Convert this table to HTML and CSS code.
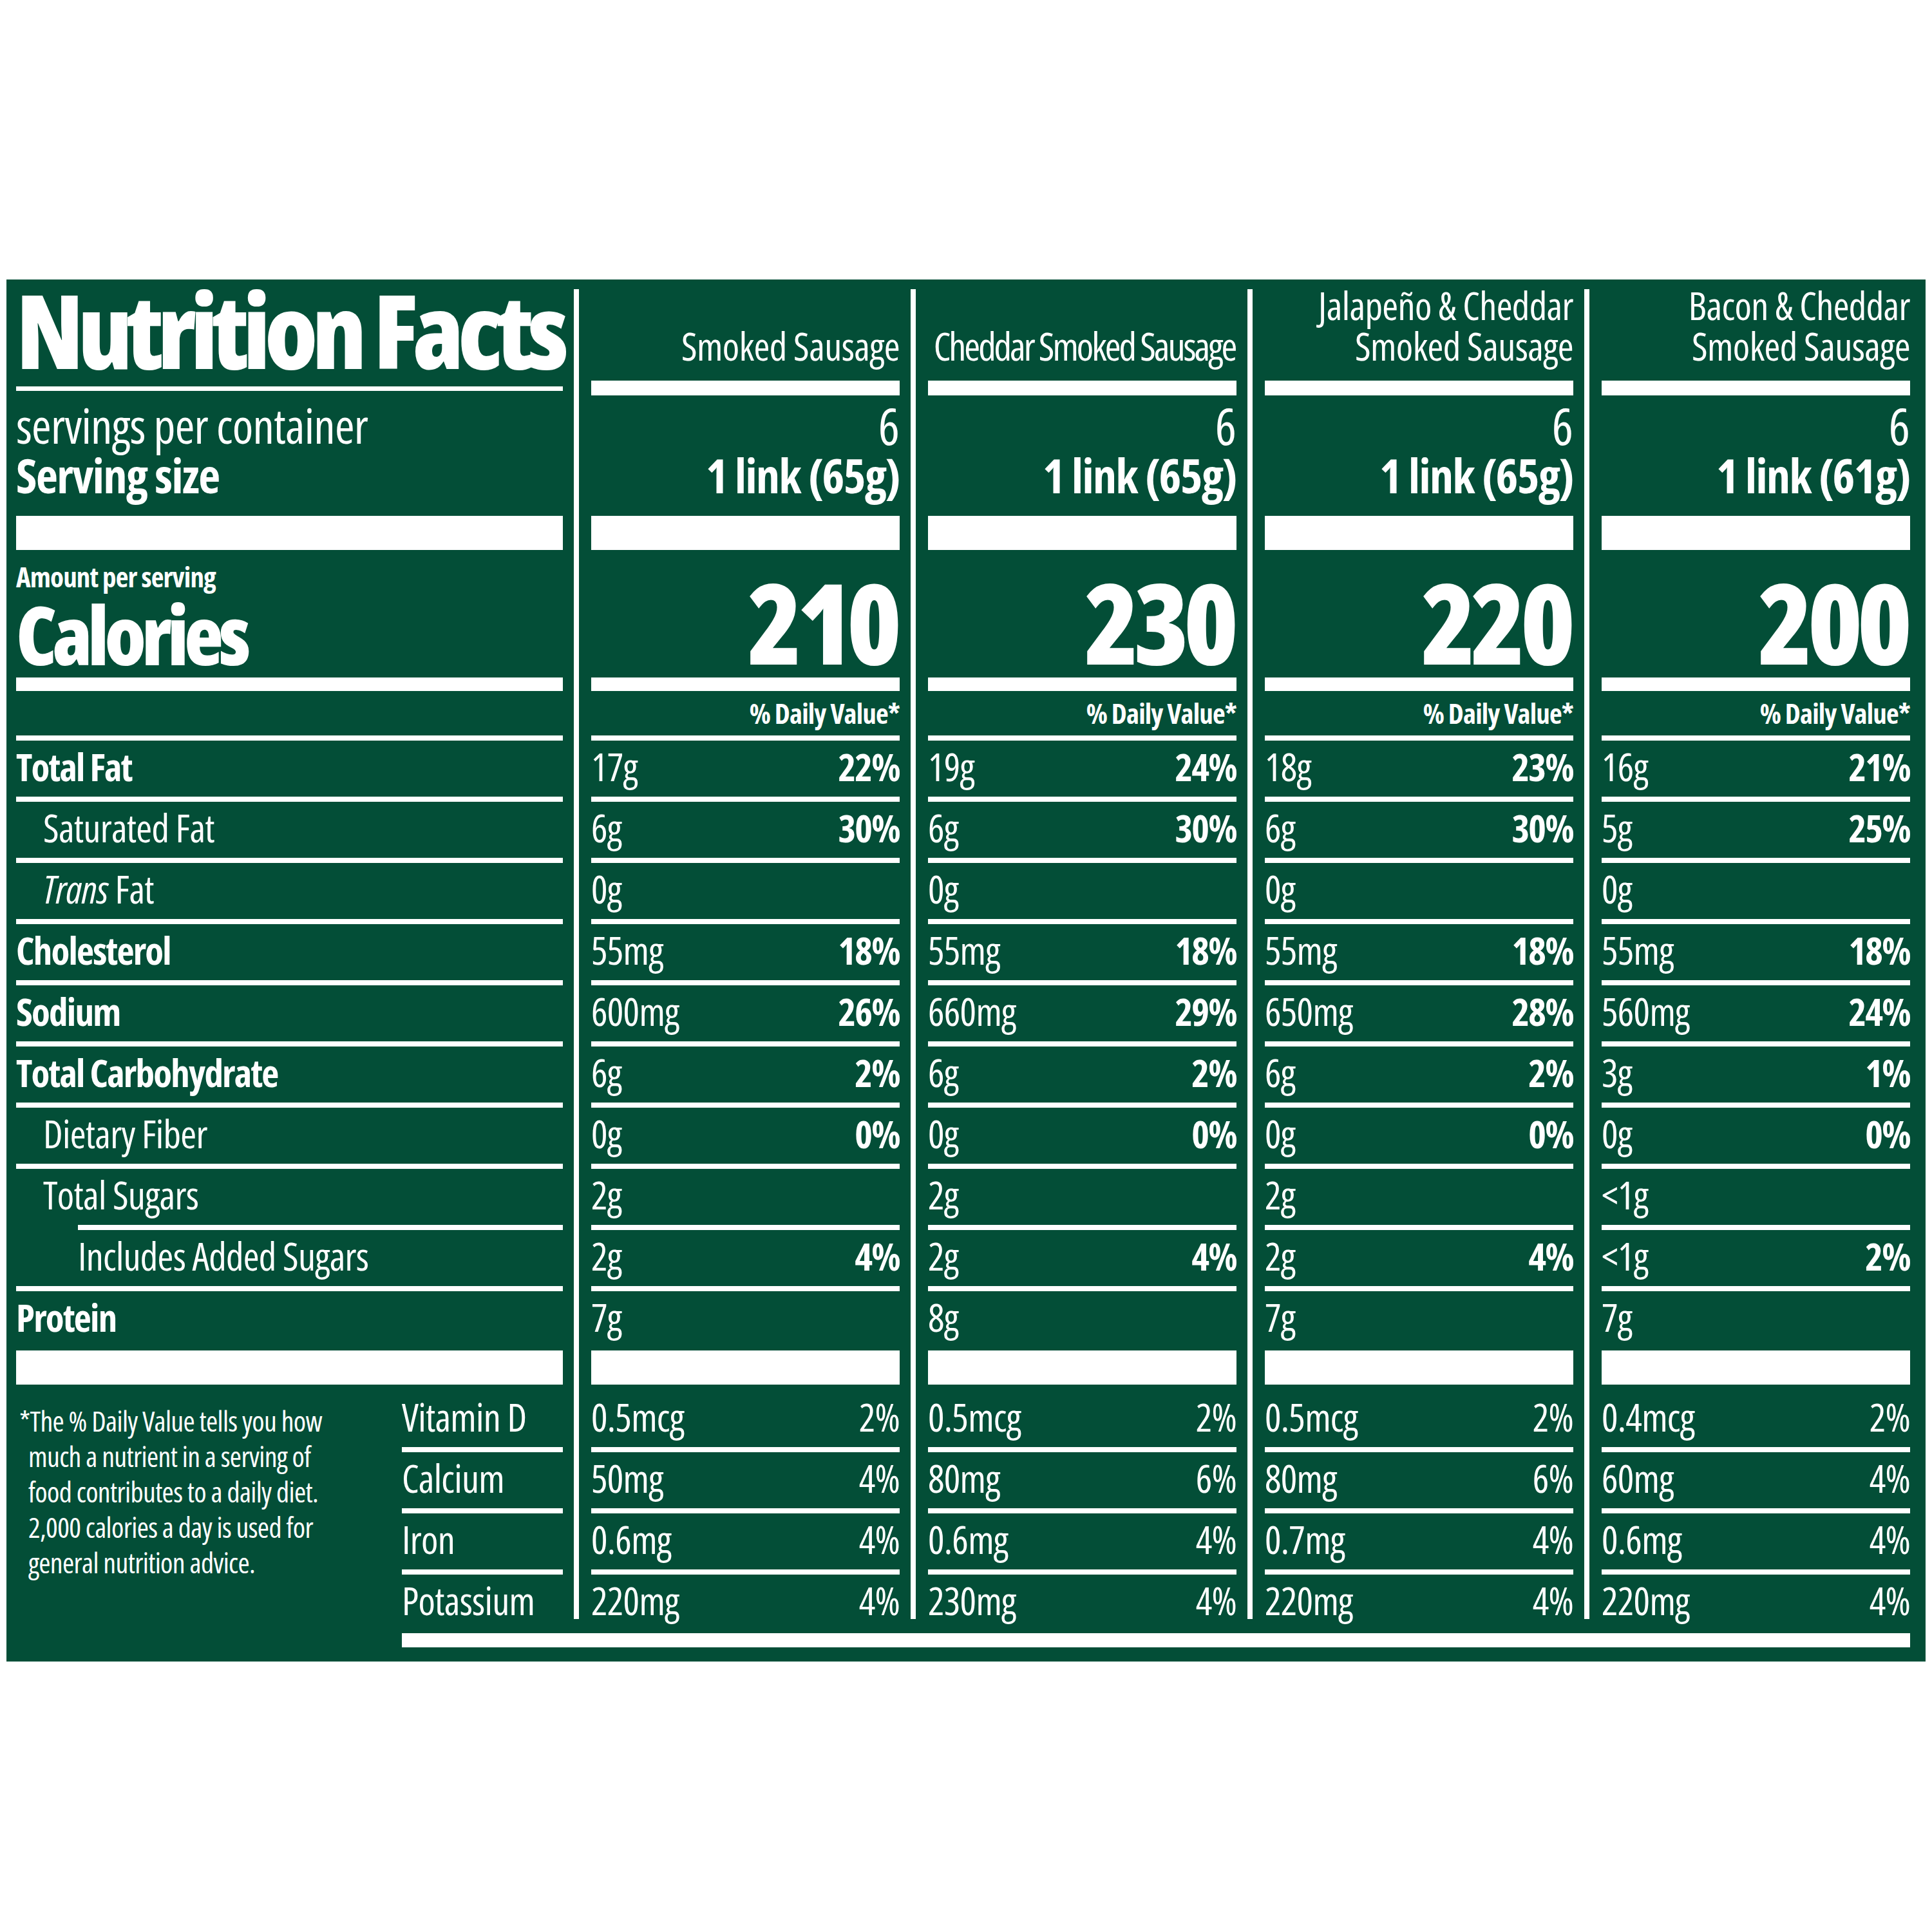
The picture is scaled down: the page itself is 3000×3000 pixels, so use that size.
FILE: index.html
```html
<!DOCTYPE html>
<html lang="en">
<head>
<meta charset="utf-8">
<title>Nutrition Facts</title>
<link rel="stylesheet" href="styles.css">
</head>
<body>
<div class="panel">
  <div class="grid">
    <div class="col-label">
      <div class="title">Nutrition Facts</div>
      <div class="title-rule"></div>
      <div class="servings">
        <div class="sv1">servings per container</div>
        <div class="sv2">Serving size</div>
      </div>
      <div class="bar-xl"></div>
      <div class="cal">
        <div class="aps">Amount per serving</div>
        <div class="cal-label">Calories</div>
      </div>
      <div class="bar-md"></div>
      <div class="dv"></div>
      <div class="rule"></div>
      <div class="row b">Total Fat</div><div class="rule"></div>
      <div class="row sub">Saturated Fat</div><div class="rule"></div>
      <div class="row sub"><span><i>Trans</i> Fat</span></div><div class="rule"></div>
      <div class="row b">Cholesterol</div><div class="rule"></div>
      <div class="row b">Sodium</div><div class="rule"></div>
      <div class="row b">Total Carbohydrate</div><div class="rule"></div>
      <div class="row sub">Dietary Fiber</div><div class="rule"></div>
      <div class="row sub">Total Sugars</div><div class="rule indent2"></div>
      <div class="row sub2">Includes Added Sugars</div><div class="rule"></div>
      <div class="row protein b">Protein</div>
      <div class="bar-xl"></div>
      <div class="vit-sec">
        <p class="note">*The % Daily Value tells you how<br>much a nutrient in a serving of<br>food contributes to a daily diet.<br>2,000 calories a day is used for<br>general nutrition advice.</p>
        <div class="vit-labels">
          <div class="vrow">Vitamin D</div><div class="rule"></div>
          <div class="vrow">Calcium</div><div class="rule"></div>
          <div class="vrow">Iron</div><div class="rule"></div>
          <div class="vrow last">Potassium</div>
        </div>
      </div>
    </div>

    <div class="col">
      <div class="head"><div class="name">Smoked Sausage</div></div>
      <div class="head-bar"></div>
      <div class="servings num"><div class="sv1">6</div><div class="sv2">1 link (65g)</div></div>
      <div class="bar-xl"></div>
      <div class="cal num-cal"><div class="cal-num">210</div></div>
      <div class="bar-md"></div>
      <div class="dv">% Daily Value*</div>
      <div class="rule"></div>
      <div class="row"><span>17g</span><b>22%</b></div><div class="rule"></div>
      <div class="row"><span>6g</span><b>30%</b></div><div class="rule"></div>
      <div class="row"><span>0g</span></div><div class="rule"></div>
      <div class="row"><span>55mg</span><b>18%</b></div><div class="rule"></div>
      <div class="row"><span>600mg</span><b>26%</b></div><div class="rule"></div>
      <div class="row"><span>6g</span><b>2%</b></div><div class="rule"></div>
      <div class="row"><span>0g</span><b>0%</b></div><div class="rule"></div>
      <div class="row"><span>2g</span></div><div class="rule"></div>
      <div class="row"><span>2g</span><b>4%</b></div><div class="rule"></div>
      <div class="row protein"><span>7g</span></div>
      <div class="bar-xl"></div>
      <div class="vit-sec vit-data">
        <div class="vrow"><span>0.5mcg</span><span>2%</span></div><div class="rule"></div>
        <div class="vrow"><span>50mg</span><span>4%</span></div><div class="rule"></div>
        <div class="vrow"><span>0.6mg</span><span>4%</span></div><div class="rule"></div>
        <div class="vrow last"><span>220mg</span><span>4%</span></div>
      </div>
    </div>

    <div class="col">
      <div class="head"><div class="name tight">Cheddar Smoked Sausage</div></div>
      <div class="head-bar"></div>
      <div class="servings num"><div class="sv1">6</div><div class="sv2">1 link (65g)</div></div>
      <div class="bar-xl"></div>
      <div class="cal num-cal"><div class="cal-num">230</div></div>
      <div class="bar-md"></div>
      <div class="dv">% Daily Value*</div>
      <div class="rule"></div>
      <div class="row"><span>19g</span><b>24%</b></div><div class="rule"></div>
      <div class="row"><span>6g</span><b>30%</b></div><div class="rule"></div>
      <div class="row"><span>0g</span></div><div class="rule"></div>
      <div class="row"><span>55mg</span><b>18%</b></div><div class="rule"></div>
      <div class="row"><span>660mg</span><b>29%</b></div><div class="rule"></div>
      <div class="row"><span>6g</span><b>2%</b></div><div class="rule"></div>
      <div class="row"><span>0g</span><b>0%</b></div><div class="rule"></div>
      <div class="row"><span>2g</span></div><div class="rule"></div>
      <div class="row"><span>2g</span><b>4%</b></div><div class="rule"></div>
      <div class="row protein"><span>8g</span></div>
      <div class="bar-xl"></div>
      <div class="vit-sec vit-data">
        <div class="vrow"><span>0.5mcg</span><span>2%</span></div><div class="rule"></div>
        <div class="vrow"><span>80mg</span><span>6%</span></div><div class="rule"></div>
        <div class="vrow"><span>0.6mg</span><span>4%</span></div><div class="rule"></div>
        <div class="vrow last"><span>230mg</span><span>4%</span></div>
      </div>
    </div>

    <div class="col">
      <div class="head"><div class="name">Jalapeño &amp; Cheddar<br>Smoked Sausage</div></div>
      <div class="head-bar"></div>
      <div class="servings num"><div class="sv1">6</div><div class="sv2">1 link (65g)</div></div>
      <div class="bar-xl"></div>
      <div class="cal num-cal"><div class="cal-num">220</div></div>
      <div class="bar-md"></div>
      <div class="dv">% Daily Value*</div>
      <div class="rule"></div>
      <div class="row"><span>18g</span><b>23%</b></div><div class="rule"></div>
      <div class="row"><span>6g</span><b>30%</b></div><div class="rule"></div>
      <div class="row"><span>0g</span></div><div class="rule"></div>
      <div class="row"><span>55mg</span><b>18%</b></div><div class="rule"></div>
      <div class="row"><span>650mg</span><b>28%</b></div><div class="rule"></div>
      <div class="row"><span>6g</span><b>2%</b></div><div class="rule"></div>
      <div class="row"><span>0g</span><b>0%</b></div><div class="rule"></div>
      <div class="row"><span>2g</span></div><div class="rule"></div>
      <div class="row"><span>2g</span><b>4%</b></div><div class="rule"></div>
      <div class="row protein"><span>7g</span></div>
      <div class="bar-xl"></div>
      <div class="vit-sec vit-data">
        <div class="vrow"><span>0.5mcg</span><span>2%</span></div><div class="rule"></div>
        <div class="vrow"><span>80mg</span><span>6%</span></div><div class="rule"></div>
        <div class="vrow"><span>0.7mg</span><span>4%</span></div><div class="rule"></div>
        <div class="vrow last"><span>220mg</span><span>4%</span></div>
      </div>
    </div>

    <div class="col">
      <div class="head"><div class="name">Bacon &amp; Cheddar<br>Smoked Sausage</div></div>
      <div class="head-bar"></div>
      <div class="servings num"><div class="sv1">6</div><div class="sv2">1 link (61g)</div></div>
      <div class="bar-xl"></div>
      <div class="cal num-cal"><div class="cal-num">200</div></div>
      <div class="bar-md"></div>
      <div class="dv">% Daily Value*</div>
      <div class="rule"></div>
      <div class="row"><span>16g</span><b>21%</b></div><div class="rule"></div>
      <div class="row"><span>5g</span><b>25%</b></div><div class="rule"></div>
      <div class="row"><span>0g</span></div><div class="rule"></div>
      <div class="row"><span>55mg</span><b>18%</b></div><div class="rule"></div>
      <div class="row"><span>560mg</span><b>24%</b></div><div class="rule"></div>
      <div class="row"><span>3g</span><b>1%</b></div><div class="rule"></div>
      <div class="row"><span>0g</span><b>0%</b></div><div class="rule"></div>
      <div class="row"><span>&lt;1g</span></div><div class="rule"></div>
      <div class="row"><span>&lt;1g</span><b>2%</b></div><div class="rule"></div>
      <div class="row protein"><span>7g</span></div>
      <div class="bar-xl"></div>
      <div class="vit-sec vit-data">
        <div class="vrow"><span>0.4mcg</span><span>2%</span></div><div class="rule"></div>
        <div class="vrow"><span>60mg</span><span>4%</span></div><div class="rule"></div>
        <div class="vrow"><span>0.6mg</span><span>4%</span></div><div class="rule"></div>
        <div class="vrow last"><span>220mg</span><span>4%</span></div>
      </div>
    </div>
  </div>
  <div class="bottom-bar"></div>
</div>
</body>
</html>
```
FILE: styles.css
```css
* { box-sizing: border-box; margin: 0; padding: 0; }

body {
  margin: 0;
  background: #ffffff;
  font-family: "Open Sans", "Liberation Sans", sans-serif;
  font-stretch: 75%;
  font-weight: 370;
  color: #ffffff;
}

.panel {
  margin: 434px 0 0 10px;
  width: 2980px;
  background: #034e37;
  padding: 15px 24px 22px 15px;
}

.grid { display: flex; }

.col-label { width: 849px; flex: none; }

.col {
  width: 506px;
  flex: none;
  margin-left: 17px;
  border-left: 8px solid #ffffff;
  padding-left: 19px;
}

/* header */
.title {
  height: 151px;
  font-size: 160px;
  line-height: 124px;
  font-weight: 800;
  letter-spacing: -0.055em;
  white-space: nowrap;
}
.title-rule { height: 7px; background: #fff; margin-bottom: 7px; }

.head {
  height: 142px;
  display: flex;
  flex-direction: column;
  justify-content: flex-end;
  padding-bottom: 22px;
}
.name {
  font-size: 60px;
  line-height: 63px;
  text-align: right;
  white-space: nowrap;
  letter-spacing: -0.01em;
}
.name.tight { letter-spacing: -0.05em; padding-right: 0.03em; }
.head-bar { height: 23px; background: #fff; }

/* servings */
.servings { height: 187px; padding-top: 12px; white-space: nowrap; }
.sv1 { font-size: 74px; line-height: 70px; letter-spacing: -0.01em; }
.sv2 { font-size: 74px; line-height: 84px; font-weight: 700; letter-spacing: -0.02em; }
.num { text-align: right; }
.num .sv1 { font-size: 78px; letter-spacing: 0; }

/* bars */
.bar-xl { height: 53px; background: #fff; }
.bar-md { height: 21px; background: #fff; }
.rule { height: 8px; background: #fff; }
.rule.indent2 { margin-left: 96px; }

/* calories */
.cal { height: 198px; padding-top: 16px; }
.aps { font-size: 43px; line-height: 51px; font-weight: 700; letter-spacing: -0.02em; white-space: nowrap; }
.cal-label { font-size: 125px; line-height: 127px; font-weight: 800; letter-spacing: -0.055em; }
.num-cal { padding-top: 26px; }
.cal-num {
  font-size: 173px;
  line-height: 170px;
  font-weight: 800;
  text-align: right;
  letter-spacing: -0.05em;
  padding-right: 0.03em;
}

.dv {
  height: 69px;
  line-height: 69px;
  font-size: 43px;
  font-weight: 700;
  letter-spacing: -0.02em;
  text-align: right;
  white-space: nowrap;
}

/* nutrient rows */
.row {
  height: 87px;
  line-height: 81px;
  font-size: 60px;
  display: flex;
  justify-content: space-between;
  white-space: nowrap;
  letter-spacing: -0.012em;
}
.row b { font-weight: 700; font-size: 59px; letter-spacing: -0.03em; }
.row.b { font-weight: 700; font-size: 59px; letter-spacing: -0.03em; }
.row.sub { padding-left: 42px; }
.row.sub2 { padding-left: 96px; }
.row.protein { height: 92px; }
.row i { font-style: italic; }

/* vitamins */
.vit-sec { height: 364px; padding-top: 10px; display: flex; }
.vit-data { display: block; }
.note {
  flex: 1;
  margin-top: 19px;
  padding-left: 19px;
  text-indent: -14px;
  font-size: 44px;
  line-height: 55px;
  letter-spacing: -0.015em;
  white-space: nowrap;
}
.vit-labels { width: 250px; flex: none; }
.vrow {
  height: 87px;
  line-height: 81px;
  font-size: 60px;
  display: flex;
  justify-content: space-between;
  white-space: nowrap;
  letter-spacing: -0.012em;
}
.vrow.last { height: 69px; }

.bottom-bar {
  height: 22px;
  margin: 22px 0 0 599px;
  background: #fff;
}
```
